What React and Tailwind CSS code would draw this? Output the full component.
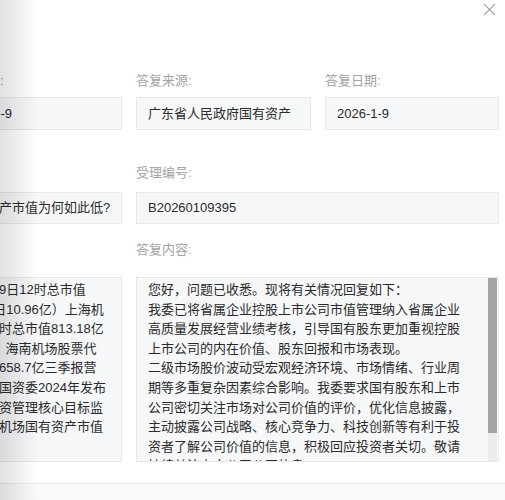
const font = { fontFamily: '"Liberation Sans", "Noto Sans CJK SC", sans-serif' };

const leftLines = [
  "，截至9日12时总市值",
  "同比2日10.96亿）上海机",
  "场同日时总市值813.18亿",
  "（元），海南机场股票代",
  "市值为658.7亿三季报营",
  "广东省国资委2024年发布",
  "考核国资管理核心目标监",
  "对海南机场国有资产市值",
];

const replyLines = [
  "您好，问题已收悉。现将有关情况回复如下：",
  "我委已将省属企业控股上市公司市值管理纳入省属企业",
  "高质量发展经营业绩考核，引导国有股东更加重视控股",
  "上市公司的内在价值、股东回报和市场表现。",
  "二级市场股价波动受宏观经济环境、市场情绪、行业周",
  "期等多重复杂因素综合影响。我委要求国有股东和上市",
  "公司密切关注市场对公司价值的评价，优化信息披露，",
  "主动披露公司战略、核心竞争力、科技创新等有利于投",
  "资者了解公司价值的信息，积极回应投资者关切。敬请",
  "持续关注上市公司公开信息。",
];

function Label({ children, className = "" }) {
  return (
    <div className={`h-[20px] text-[13px] leading-[20px] text-[#a3a3a3] whitespace-nowrap ${className}`}>
      {children}
    </div>
  );
}

function Field({ children, className = "" }) {
  return (
    <div
      className={`flex items-center px-[11px] bg-[#f6f7f9] border border-[#e7e8ea] text-[13px] text-[#2b2b2b] whitespace-nowrap overflow-hidden ${className}`}
    >
      {children}
    </div>
  );
}

export default function App() {
  return (
    <div className="relative w-[505px] h-[500px] overflow-hidden bg-white" style={font}>
      {/* close */}
      <button className="absolute right-[9px] top-[3px] w-[13px] h-[13px] text-[#a8a8a8]">
        <svg viewBox="0 0 13 13" width="13" height="13" fill="none" stroke="currentColor" strokeWidth="1.2">
          <path d="M1 1L12 12M12 1L1 12" />
        </svg>
      </button>

      <div className="ml-[-52px] pt-[71px]">
        {/* row 1 */}
        <div className="grid grid-cols-[174px_175px_174px] gap-x-[14px]">
          <div>
            <Label>提问日期:</Label>
            <Field className="mt-[6px] h-[33px]">2026-1-9</Field>
          </div>
          <div>
            <Label>答复来源:</Label>
            <Field className="mt-[6px] h-[33px]">
              <div className="w-[143px] overflow-hidden">广东省人民政府国有资产监督管理委员会</div>
            </Field>
          </div>
          <div>
            <Label>答复日期:</Label>
            <Field className="mt-[6px] h-[33px]">2026-1-9</Field>
          </div>
        </div>

        {/* row 2 */}
        <div className="grid grid-cols-[174px_1fr] gap-x-[14px] w-[551px] mt-[33px]">
          <div>
            <Label>问题:</Label>
            <Field className="mt-[9px] h-[32px]">国有资产市值为何如此低?</Field>
          </div>
          <div>
            <Label>受理编号:</Label>
            <Field className="mt-[9px] h-[32px]">B20260109395</Field>
          </div>
        </div>

        {/* row 3 */}
        <div className="grid grid-cols-[174px_1fr] gap-x-[14px] w-[551px] mt-[16px]">
          <div>
            <Label>内容:</Label>
            <div className="mt-[17px] h-[185px] bg-[#f6f7f9] border border-[#e7e8ea] px-[11px] pt-[2px] text-[13px] leading-[19.6px] text-[#2b2b2b] overflow-hidden">
              {leftLines.map((l, i) => (
                <div key={i} className="whitespace-nowrap">{l}</div>
              ))}
            </div>
          </div>
          <div>
            <Label>答复内容:</Label>
            <div className="mt-[17px] h-[185px] flex bg-[#f6f7f9] border border-[#e7e8ea] overflow-hidden">
              <div className="flex-1 pl-[11px] pt-[2px] text-[13px] leading-[19.6px] text-[#2b2b2b] overflow-hidden">
                {replyLines.map((l, i) => (
                  <div key={i} className="whitespace-nowrap">{l}</div>
                ))}
              </div>
              <div className="w-[9px] mr-[1px] flex flex-col bg-[#ececec]">
                <div className="h-[155px] bg-[#a3a3a3]" />
              </div>
            </div>
          </div>
        </div>
      </div>

      {/* footer */}
      <div className="mt-[21px] h-[20px] border-t border-[#ebebeb] bg-[#fafafa]" />

      {/* left edge shade */}
      <div className="pointer-events-none absolute left-0 top-0 h-full w-[38px] bg-linear-to-r from-black/12 to-transparent" />
    </div>
  );
}
